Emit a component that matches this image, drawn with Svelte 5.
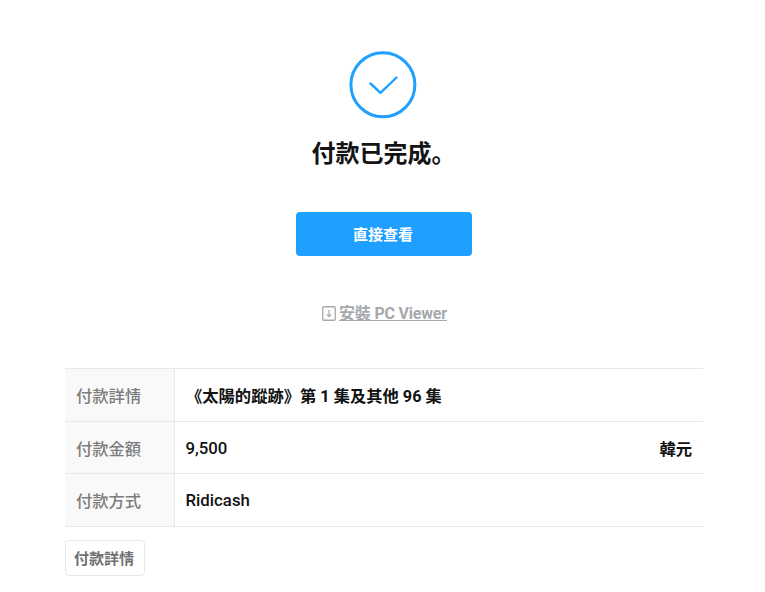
<script>
  const rows = [
    { label: '付款詳情', value: '《太陽的蹤跡》第 1 集及其他 96 集', title: true },
    { label: '付款金額', value: '9,500', unit: '韓元' },
    { label: '付款方式', value: 'Ridicash' }
  ];
</script>

<main class="page">
  <section class="hero">
    <svg class="check" width="68" height="68" viewBox="0 0 68 68" aria-hidden="true">
      <circle cx="33.9" cy="33.7" r="32" fill="none" stroke="#1f9fff" stroke-width="3" />
      <path d="M21.5 32.5 L31.5 41.8 L47.5 26.5" fill="none" stroke="#1f9fff" stroke-width="2.4" stroke-linecap="round" stroke-linejoin="round" />
    </svg>
    <h1>付款已完成。</h1>
    <button class="primary"><span>直接查看</span></button>
    <a class="install" href="#install">
      <svg width="14" height="15" viewBox="0 0 14 15" aria-hidden="true">
        <path d="M2 .75 H12 Q13.25 .75 13.25 2 V13 Q13.25 14.25 12 14.25 H2 Q.75 14.25 .75 13 V2 Q.75 .75 2 .75 Z" fill="none" stroke="#a5a9ad" stroke-width="1.3" />
        <path d="M7 4 V10.5 M4.6 8.2 L7 10.6 L9.4 8.2" fill="none" stroke="#a5a9ad" stroke-width="1.2" />
      </svg>
      <span>安裝 PC Viewer</span>
    </a>
  </section>

  <div class="table">
    {#each rows as row}
      <div class="row">
        <div class="label">{row.label}</div>
        <div class="value" class:title={row.title}>
          <span>{row.value}</span>
          {#if row.unit}<span class="unit">{row.unit}</span>{/if}
        </div>
      </div>
    {/each}
  </div>

  <button class="details">付款詳情</button>
</main>

<style>
  :global(body) {
    margin: 0;
    background: #fff;
    font-family: Roboto, "Noto Sans CJK KR", sans-serif;
  }
  .page {
    box-sizing: border-box;
    width: 765px;
    padding: 51px 62px 16px 65px;
  }
  .hero {
    display: flex;
    flex-direction: column;
    align-items: center;
  }
  .check {
    display: block;
    margin-right: 2px;
  }
  h1 {
    margin: 18px 0 0;
    font-size: 24px;
    line-height: 35px;
    font-weight: 700;
    color: #141414;
    margin-right: 1px;
  }
  .primary {
    width: 176px;
    height: 44px;
    margin-top: 40px;
    border: 0;
    border-radius: 4px;
    background: #1f9fff;
    color: #fff;
    font: 700 15px/20px Roboto, "Noto Sans CJK KR", sans-serif;
    padding: 2px 2px 0 0;
  }
  .install {
    display: flex;
    align-items: center;
    gap: 3px;
    margin-top: 47px;
    margin-left: 1px;
    color: #a5a9ad;
    font-size: 16px;
    line-height: 22px;
    font-weight: 700;
    letter-spacing: -0.2px;
  }
  .install svg {
    margin-bottom: 2px;
  }
  .install span {
    text-decoration: underline;
  }
  .table {
    margin-top: 43px;
    border-top: 1px solid #e6e8eb;
  }
  .row {
    display: flex;
    border-bottom: 1px solid #e6e8eb;
    height: 51.67px;
    box-sizing: content-box;
  }
  .label {
    box-sizing: border-box;
    width: 110px;
    padding-left: 11px;
    display: flex;
    align-items: center;
    background: #f9f9f9;
    border-right: 1px solid #e6e8eb;
    color: #7d7d7d;
    font-size: 16.3px;
    font-weight: 500;
  }
  .row:nth-child(2) .label,
  .row:nth-child(2) .value {
    padding-top: 2px;
  }
  .value {
    flex: 1;
    display: flex;
    align-items: center;
    justify-content: space-between;
    padding: 0 11px 0 10.5px;
    color: #111;
    font-size: 16.8px;
    font-weight: 500;
  }
  .value.title {
    font-weight: 700;
    font-size: 16.3px;
    padding-left: 11px;
  }
  .unit {
    font-size: 16.3px;
    font-weight: 700;
  }
  .details {
    display: block;
    width: 80px;
    height: 36px;
    margin-top: 13px;
    padding: 2px 2px 0 0;
    background: #fff;
    border: 1px solid #e6e8eb;
    border-radius: 4px;
    color: #707070;
    font: 700 15px/20px Roboto, "Noto Sans CJK KR", sans-serif;
  }
</style>
